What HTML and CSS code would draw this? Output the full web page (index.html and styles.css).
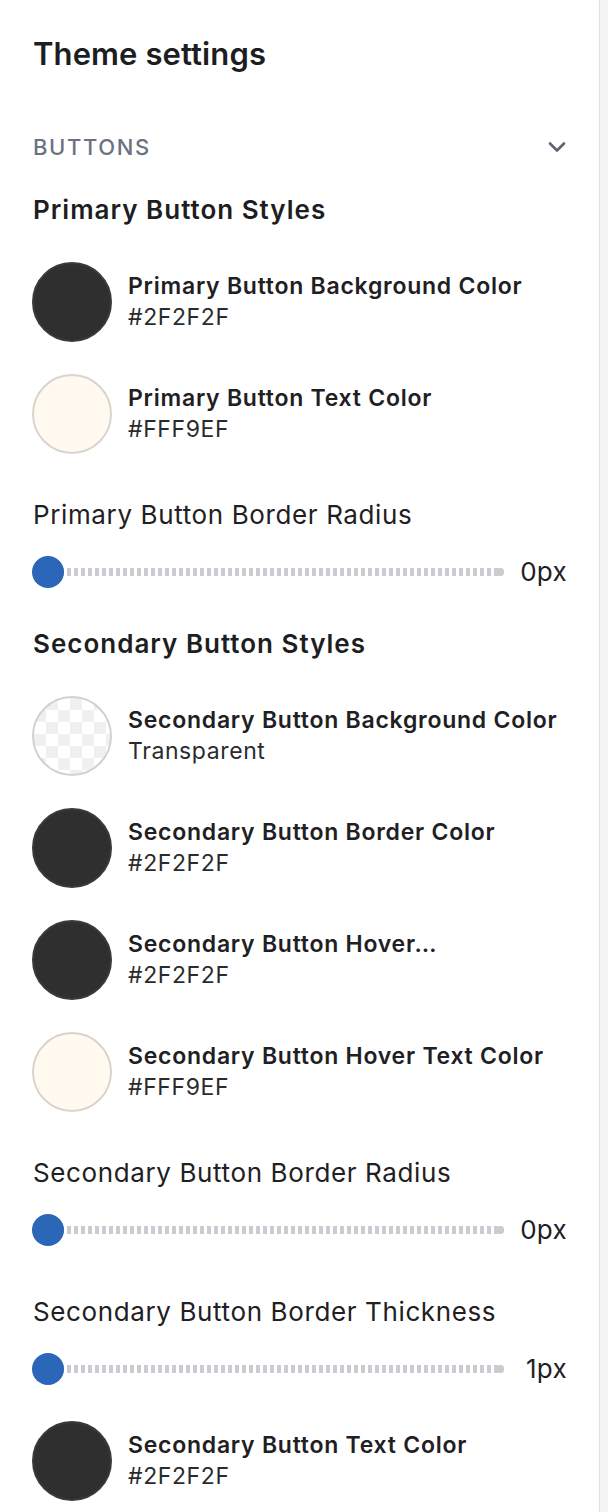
FILE: index.html
```html
<!DOCTYPE html>
<html lang="en">
<head>
<meta charset="utf-8">
<title>Theme settings</title>
<link rel="stylesheet" href="styles.css">
</head>
<body>
<div class="layout">
  <main class="panel">
    <h1 class="title">Theme settings</h1>

    <div class="section-head">
      <span class="section-name">BUTTONS</span>
      <svg class="chevron" width="18" height="12" viewBox="0 0 18 12" aria-hidden="true">
        <path d="M2 2.5 L9 9.5 L16 2.5" fill="none" stroke="#5d6470" stroke-width="2.6" stroke-linecap="round" stroke-linejoin="round"/>
      </svg>
    </div>

    <h2 class="group-title">Primary Button Styles</h2>

    <div class="swatch-row first">
      <span class="swatch dark"></span>
      <div class="swatch-text">
        <div class="swatch-label">Primary Button Background Color</div>
        <div class="swatch-value">#2F2F2F</div>
      </div>
    </div>
    <div class="swatch-row">
      <span class="swatch cream"></span>
      <div class="swatch-text">
        <div class="swatch-label">Primary Button Text Color</div>
        <div class="swatch-value">#FFF9EF</div>
      </div>
    </div>

    <div class="range-label after-swatch">Primary Button Border Radius</div>
    <div class="range-row">
      <div class="track"><span class="thumb"></span></div>
      <span class="range-value">0px</span>
    </div>

    <h2 class="group-title after-range">Secondary Button Styles</h2>

    <div class="swatch-row first">
      <span class="swatch transparent"></span>
      <div class="swatch-text">
        <div class="swatch-label">Secondary Button Background Color</div>
        <div class="swatch-value">Transparent</div>
      </div>
    </div>
    <div class="swatch-row">
      <span class="swatch dark"></span>
      <div class="swatch-text">
        <div class="swatch-label">Secondary Button Border Color</div>
        <div class="swatch-value">#2F2F2F</div>
      </div>
    </div>
    <div class="swatch-row">
      <span class="swatch dark"></span>
      <div class="swatch-text">
        <div class="swatch-label">Secondary Button Hover…</div>
        <div class="swatch-value">#2F2F2F</div>
      </div>
    </div>
    <div class="swatch-row">
      <span class="swatch cream"></span>
      <div class="swatch-text">
        <div class="swatch-label">Secondary Button Hover Text Color</div>
        <div class="swatch-value">#FFF9EF</div>
      </div>
    </div>

    <div class="range-label after-swatch">Secondary Button Border Radius</div>
    <div class="range-row">
      <div class="track"><span class="thumb"></span></div>
      <span class="range-value">0px</span>
    </div>

    <div class="range-label after-range-row">Secondary Button Border Thickness</div>
    <div class="range-row">
      <div class="track"><span class="thumb"></span></div>
      <span class="range-value">1px</span>
    </div>

    <div class="swatch-row after-range-swatch">
      <span class="swatch dark"></span>
      <div class="swatch-text">
        <div class="swatch-label">Secondary Button Text Color</div>
        <div class="swatch-value">#2F2F2F</div>
      </div>
    </div>
  </main>
  <div class="scrollbar"></div>
</div>
</body>
</html>
```

FILE: styles.css
```css
* { box-sizing: border-box; }

html, body {
  margin: 0;
  padding: 0;
  background: #ffffff;
}

body {
  font-family: Inter, "Noto Sans", "Liberation Sans", sans-serif;
  color: #1f2024;
}

.layout {
  display: flex;
  min-height: 1512px;
  width: 608px;
}

.panel {
  flex: 1;
  display: flex;
  flex-direction: column;
  padding: 34px 32px 0 32px;
}

.scrollbar {
  width: 9px;
  background: #f3f3f5;
  border-left: 1px solid #dfe0e4;
}

.title {
  margin: 0 0 0 1px;
  font-size: 31px;
  line-height: 40px;
  font-weight: 600;
  color: #1d1e22;
  letter-spacing: 0.1px;
}

.section-head {
  margin-top: 53px;
  height: 40px;
  display: flex;
  align-items: center;
  justify-content: space-between;
}

.section-name {
  margin-left: 1px;
  font-size: 22px;
  line-height: 40px;
  font-weight: 500;
  color: #6b7280;
  letter-spacing: 1.6px;
}

.chevron {
  display: block;
  margin-right: 1px;
}

.group-title {
  margin: 27px 0 0 1px;
  font-size: 26px;
  line-height: 32px;
  font-weight: 600;
  color: #1d1e22;
  letter-spacing: 1px;
}

.group-title.after-range {
  margin-top: 40px;
}

.swatch-row {
  display: flex;
  align-items: center;
  gap: 16px;
  margin-top: 32px;
}

.swatch-row.first {
  margin-top: 36px;
}

.swatch-row.after-range-swatch {
  margin-top: 36px;
}

.swatch {
  flex: none;
  width: 80px;
  height: 80px;
  border-radius: 50%;
  border: 2px solid transparent;
}

.swatch.dark {
  background: #2f2f2f;
  border-color: #3a3a3a;
}

.swatch.cream {
  background: #fff9ef;
  border-color: #d9d5ce;
}

.swatch.transparent {
  border-color: #d2d2d4;
  background-color: #ffffff;
  background-image:
    linear-gradient(45deg, #eef0f2 25%, transparent 25%, transparent 75%, #eef0f2 75%),
    linear-gradient(45deg, #eef0f2 25%, transparent 25%, transparent 75%, #eef0f2 75%);
  background-size: 24px 24px;
  background-position: 0 0, 12px 12px;
}

.swatch-text {
  display: flex;
  flex-direction: column;
}

.swatch-label {
  font-size: 23px;
  line-height: 31px;
  font-weight: 600;
  color: #1f2024;
  letter-spacing: 0.75px;
}

.swatch-value {
  font-size: 23px;
  line-height: 31px;
  font-weight: 400;
  color: #2a2b2f;
  letter-spacing: 0.6px;
}

.range-label {
  margin: 0 0 0 1px;
  font-size: 26px;
  line-height: 32px;
  font-weight: 400;
  color: #1f2024;
  letter-spacing: 0.62px;
}

.range-label.after-swatch {
  margin-top: 45px;
}

.range-label.after-range-row {
  margin-top: 50px;
}

.range-row {
  display: flex;
  align-items: center;
  margin-top: 25px;
  height: 32px;
}

.track {
  position: relative;
  flex: 1;
  height: 32px;
  display: flex;
  align-items: center;
}

.track::before {
  content: "";
  display: block;
  margin-left: 28px;
  flex: 1;
  height: 8px;
  border-radius: 4px;
  background-image: repeating-linear-gradient(90deg, #c9ccd1 0 4px, transparent 4px 7px);
}

.track::after {
  content: "";
  position: absolute;
  right: 0;
  top: 12px;
  width: 8px;
  height: 8px;
  border-radius: 4px;
  background: #c9ccd1;
}

.thumb {
  position: absolute;
  left: 0;
  top: 0;
  width: 32px;
  height: 32px;
  border-radius: 50%;
  background: #2b66b9;
}

.range-value {
  flex: none;
  width: 63px;
  text-align: right;
  font-size: 26px;
  line-height: 32px;
  font-weight: 400;
  color: #1f2024;
  letter-spacing: 0.3px;
}
```
